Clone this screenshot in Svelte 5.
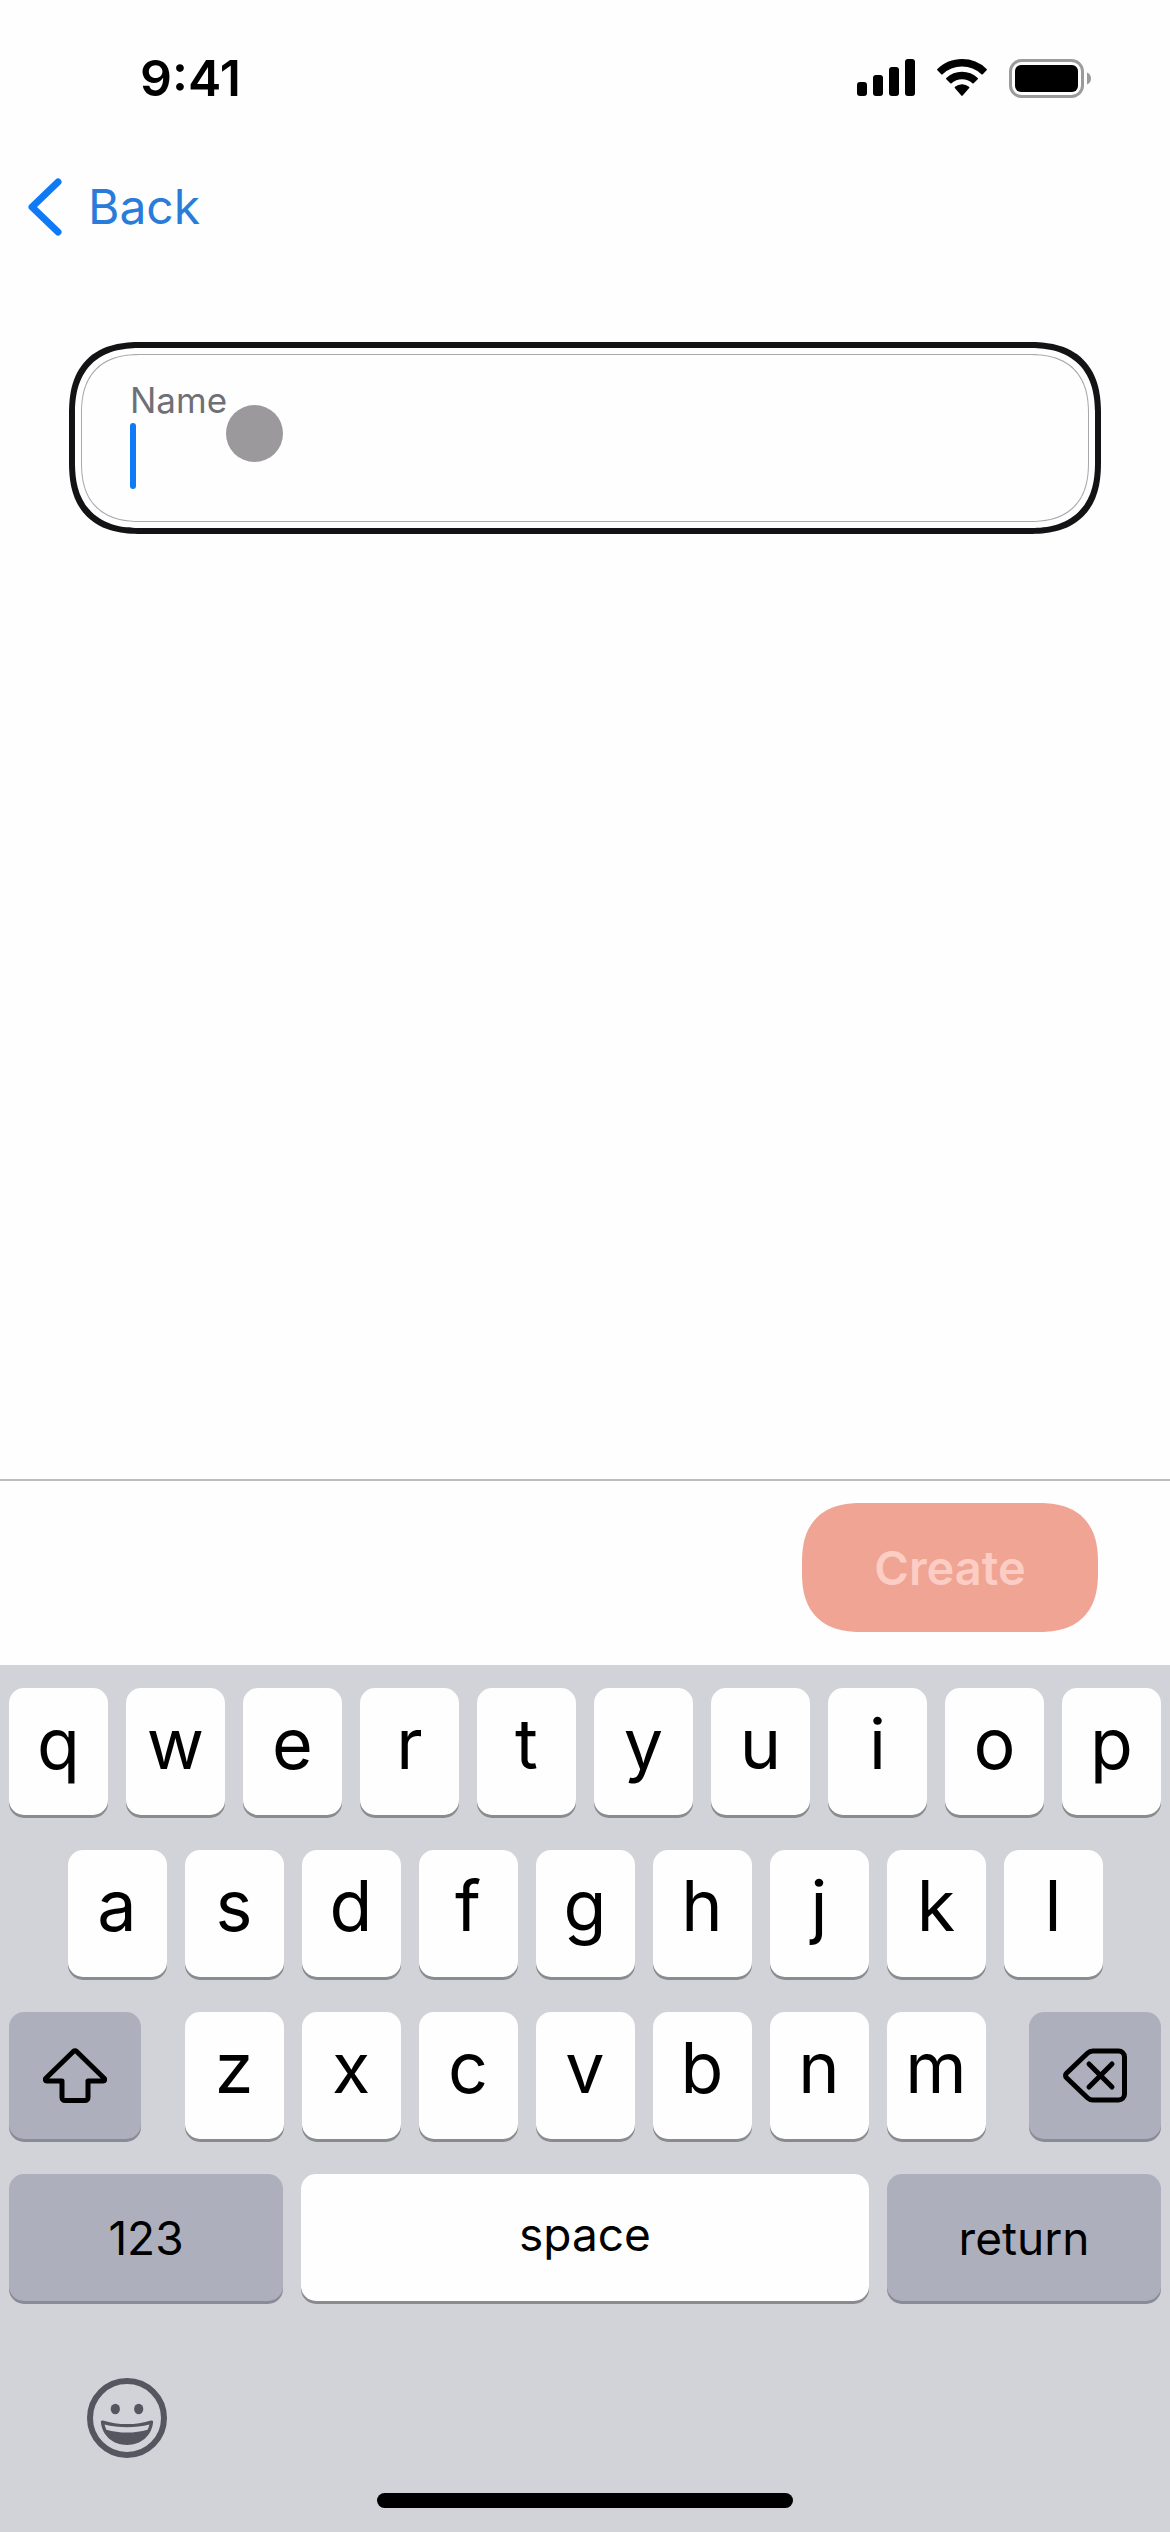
<script lang="ts">
	const topRow = [..."qwertyuiop"];
	const homeRow = [..."asdfghjkl"];
	const bottomRow = [..."zxcvbnm"];

	let name = $state("");
	const canCreate = $derived(name.trim().length > 0);

	const type = (letter: string) => {
		name += letter;
	};
	const erase = () => {
		name = name.slice(0, -1);
	};
</script>

<div class="screen">
	<header class="status-bar">
		<span class="time">9:41</span>
		<div class="status-icons">
			<svg class="signal" viewBox="0 0 58 38" aria-hidden="true">
				<rect x="0" y="23" width="10" height="14" rx="3" />
				<rect x="16" y="16" width="10" height="21" rx="3" />
				<rect x="32" y="8" width="10" height="29" rx="3" />
				<rect x="48" y="0" width="10" height="37" rx="3" />
			</svg>
			<svg class="wifi" viewBox="0 0 50 38" aria-hidden="true">
				<path d="M25 0C15.500 0 6.800 3.700 .4 9.900a1 1 0 0 0 0 1.400l3.800 3.900a1 1 0 0 0 1.400 0A28 28 0 0 1 25 7.500a28 28 0 0 1 19.400 7.700 1 1 0 0 0 1.400 0l3.800-3.900a1 1 0 0 0 0-1.400A35.400 35.400 0 0 0 25 0Z" />
				<path d="M25 12.700a23 23 0 0 0-15.700 6.200 1 1 0 0 0 0 1.400l4 4a1 1 0 0 0 1.300 0A15.300 15.300 0 0 1 25 20.200c4 0 7.600 1.500 10.400 4.100a1 1 0 0 0 1.300 0l4-4a1 1 0 0 0 0-1.400A23 23 0 0 0 25 12.700Z" />
				<path d="M25 25.300a11 11 0 0 0-7 2.500 1 1 0 0 0 0 1.500l6.300 7.300a1 1 0 0 0 1.400 0l6.300-7.300a1 1 0 0 0 0-1.500 11 11 0 0 0-7-2.500Z" />
			</svg>
			<svg class="battery" viewBox="0 0 82 39" aria-hidden="true">
				<rect class="shell" x="1.500" y="1.500" width="72" height="36" rx="11" />
				<rect x="6" y="6" width="63" height="27" rx="6" />
				<path class="nub" d="M78 13.500c2.600 1 4 3.300 4 6s-1.400 5-4 6Z" />
			</svg>
		</div>
	</header>

	<nav class="nav-bar">
		<a class="back" href="#back">
			<svg class="chevron" viewBox="0 0 34 58" aria-hidden="true">
				<path d="M30 4 4 29l26 25" />
			</svg>
			Back
		</a>
	</nav>

	<main class="content">
		<div class="focus-ring">
			<div class="field">
				<label for="name">Name</label>
				<div class="input-row">
					<input id="name" type="text" autocomplete="off" bind:value={name} />
					<span class="caret"></span>
				</div>
				<span class="touch"></span>
			</div>
		</div>
	</main>

	<footer class="actions">
		<button class="create" type="button" disabled={!canCreate}>Create</button>
	</footer>

	<section class="keyboard" aria-label="Keyboard">
		<div class="row">
			{#each topRow as letter (letter)}
				<button class="key letter" type="button" onclick={() => type(letter)}>{letter}</button>
			{/each}
		</div>
		<div class="row">
			{#each homeRow as letter (letter)}
				<button class="key letter" type="button" onclick={() => type(letter)}>{letter}</button>
			{/each}
		</div>
		<div class="row row-split">
			<button class="key dark side" type="button" aria-label="Shift">
				<svg class="shift" viewBox="0 0 64 56" aria-hidden="true">
					<path d="M30.600 3.200 2.900 30.200c-1.200 1.300-.6 2.800 1 2.800H19v16.500a3 3 0 0 0 3 3h20a3 3 0 0 0 3-3V33h15.100c1.600 0 2.200-1.500 1-2.800L33.400 3.200a2 2 0 0 0-2.800 0Z" />
				</svg>
			</button>
			<div class="row letters">
				{#each bottomRow as letter (letter)}
					<button class="key letter" type="button" onclick={() => type(letter)}>{letter}</button>
				{/each}
			</div>
			<button class="key dark side" type="button" aria-label="Delete" onclick={erase}>
				<svg class="delete" viewBox="0 0 64 56" aria-hidden="true">
					<path d="M30 3h25.500a6 6 0 0 1 6 6v37a6 6 0 0 1-6 6H30a8 8 0 0 1-5.600-2.300L3.500 29.800a3.200 3.200 0 0 1 0-4.600L24.400 5.300A8 8 0 0 1 30 3Z" />
					<path d="m26 16 23 23M49 16 26 39" />
				</svg>
			</button>
		</div>
		<div class="row row-bottom">
			<button class="key dark" type="button">123</button>
			<button class="key space" type="button" onclick={() => type(" ")}>space</button>
			<button class="key dark" type="button">return</button>
		</div>

		<button class="emoji" type="button" aria-label="Emoji">
			<svg viewBox="0 0 80 80" aria-hidden="true">
				<circle class="face" cx="40" cy="40" r="37" />
				<ellipse cx="28.300" cy="31" rx="4.600" ry="5.200" />
				<ellipse cx="51.700" cy="31" rx="4.600" ry="5.200" />
				<path
					fill-rule="evenodd"
					d="M16 42.500c7.500 2.500 15.500 3.600 24 3.600s16.500-1.100 24-3.600c1.400-.4 2.300.3 2.100 1.800C64.800 57.800 54 67 40 67S15.200 57.800 13.900 44.300c-.2-1.500.7-2.200 2.100-1.800Zm1.600 4.100c.4 2 1 3.700 1.800 5.200 6.400 1.900 13.400 2.800 20.600 2.800s14.200-.9 20.600-2.800c.8-1.500 1.400-3.200 1.800-5.200-7 1.900-14.500 2.700-22.400 2.700s-15.400-.8-22.400-2.700Z"
				/>
			</svg>
		</button>
		<div class="home-indicator"></div>
	</section>
</div>

<style>
	:global(body) {
		background: #fefefe;
	}

	.screen {
		display: flex;
		flex-direction: column;
		min-height: 100vh;
		font-family: Inter, "Liberation Sans", sans-serif;
		color: #000;
	}

	button,
	input {
		padding: 0;
		border: 0;
		font: inherit;
		color: inherit;
		background: none;
	}

	.status-bar {
		display: flex;
		align-items: center;
		justify-content: space-between;
		height: 156px;
		padding: 0 79px 0 140px;
	}

	.time {
		font-size: 50px;
		font-weight: 600;
	}

	.status-icons {
		display: flex;
		align-items: center;
		gap: 22px;
	}

	.signal {
		width: 58px;
		height: 38px;
	}

	.wifi {
		width: 50px;
		height: 38px;
	}

	.battery {
		width: 82px;
		height: 39px;
	}

	.battery .shell {
		fill: none;
		stroke: #9b9b9b;
		stroke-width: 3;
	}

	.battery .nub {
		fill: #9b9b9b;
	}

	.nav-bar {
		display: flex;
		align-items: center;
		height: 101px;
		padding: 0 28px;
	}

	.back {
		display: flex;
		align-items: center;
		gap: 26px;
		font-size: 48px;
		color: #2a7cdb;
		text-decoration: none;
	}

	.chevron {
		width: 34px;
		height: 58px;
		fill: none;
		stroke: #0f7af5;
		stroke-width: 7;
		stroke-linecap: round;
		stroke-linejoin: round;
	}

	.content {
		flex: 1;
		padding: 85px 69px 0;
	}

	.focus-ring {
		padding: 6px;
		border: 6px solid #131315;
		border-radius: 72px;
		corner-shape: superellipse(1.3);
	}

	.field {
		position: relative;
		box-sizing: border-box;
		height: 168px;
		padding: 24px 48px;
		border: 1px solid #a9a9ad;
		border-radius: 60px;
		corner-shape: superellipse(1.3);
	}

	.field label {
		display: block;
		font-size: 35px;
		line-height: 42px;
		color: #6f6f78;
	}

	.input-row {
		position: relative;
		display: flex;
		height: 70px;
	}

	.input-row input {
		flex: 1;
		font-size: 48px;
		outline: none;
		caret-color: transparent;
	}

	.caret {
		position: absolute;
		top: 2px;
		left: 0;
		width: 6px;
		height: 66px;
		border-radius: 3px;
		background: #0f7af5;
	}

	.touch {
		position: absolute;
		top: 50px;
		left: 144px;
		width: 57px;
		height: 57px;
		border-radius: 50%;
		background: #9c999c;
	}

	.actions {
		display: flex;
		justify-content: flex-end;
		padding: 22px 72px 33px;
		border-top: 2px solid #bbbdc0;
	}

	.create {
		width: 296px;
		height: 129px;
		border-radius: 60px;
		corner-shape: superellipse(1.3);
		font-size: 47px;
		font-weight: 600;
		color: #fff;
		background: #e64c2a;
	}

	.create:disabled {
		color: #fccdc4;
		background: #f0a493;
	}

	.keyboard {
		display: flex;
		flex-direction: column;
		gap: 35px;
		padding: 23px 9px 24px;
		background: #d2d3d9;
	}

	.row {
		--key-width: calc((100vw - 180px) / 10);
		display: flex;
		justify-content: center;
		gap: 18px;
	}

	.row-split {
		justify-content: space-between;
	}

	.row-bottom {
		display: grid;
		grid-template-columns: 274fr 568fr 274fr;
	}

	.key {
		height: 127px;
		border-radius: 15px;
		font-size: 46px;
		background: #fefefe;
		box-shadow: 0 3px 0 #8a8b8f;
	}

	.key.letter {
		width: var(--key-width);
		padding-bottom: 16px;
		font-size: 70px;
	}

	.key.space {
		padding-bottom: 8px;
	}

	.key.dark {
		background: #adb0bc;
		box-shadow: 0 3px 0 #898b97;
	}

	.key.side {
		width: 132px;
	}

	.key svg {
		display: block;
		width: 64px;
		height: 56px;
		margin: 0 auto;
		fill: none;
		stroke: #000;
		stroke-width: 5;
		stroke-linecap: round;
		stroke-linejoin: round;
	}

	.emoji {
		width: 80px;
		height: 80px;
		margin: 42px 0 0 78px;
	}

	.emoji svg {
		display: block;
		fill: #555660;
	}

	.emoji .face {
		fill: none;
		stroke: #555660;
		stroke-width: 6;
	}

	.home-indicator {
		align-self: center;
		width: 416px;
		height: 15px;
		border-radius: 8px;
		background: #000;
	}
</style>
